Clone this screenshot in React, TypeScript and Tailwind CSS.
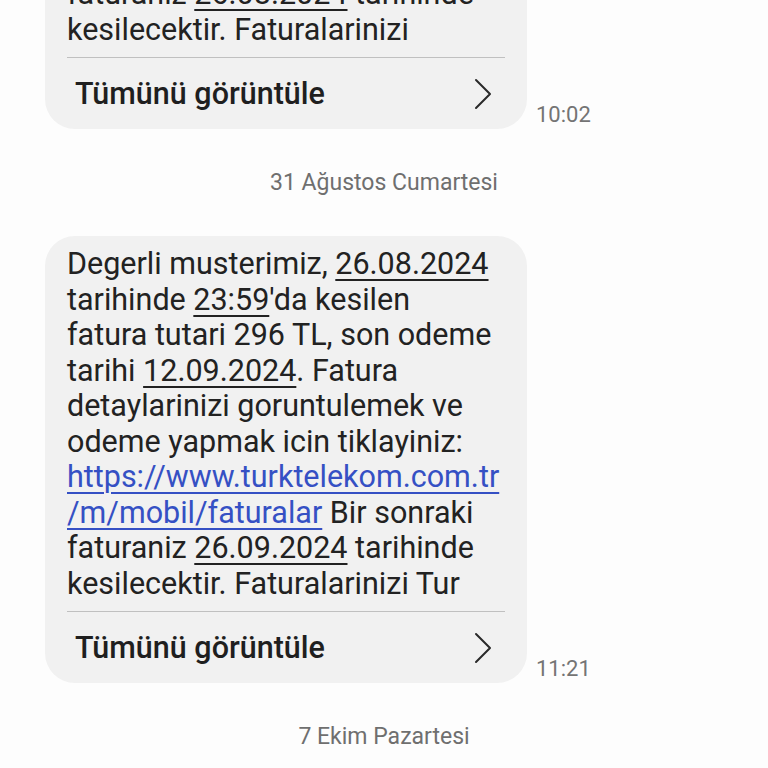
import React from 'react';

const font = { fontFamily: 'Roboto, "Noto Sans", Arial, sans-serif' };

function Underlined({ children }: { children: React.ReactNode }) {
  return <span className="underline decoration-[1.5px] underline-offset-[5px]">{children}</span>;
}

function Footer() {
  return (
    <div className="mx-[22px] border-t border-[#c0c0c0]">
      <div className="flex h-[71px] items-center justify-between pl-[8px] pr-[12px] pt-[1px]">
        <span className="text-[30.5px] font-medium text-[#1f1f1f]">Tümünü görüntüle</span>
        <svg width="20" height="32" viewBox="0 0 20 32" fill="none">
          <path d="M3 2 L17 16 L3 30" stroke="#2a2a2a" strokeWidth="2" strokeLinejoin="round" strokeLinecap="round" />
        </svg>
      </div>
    </div>
  );
}

function Bubble({ lines, time, className }: { lines: React.ReactNode; time: string; className?: string }) {
  return (
    <div className={`flex items-end pl-[45px] ${className ?? ''}`}>
      <div className="w-[482px] rounded-[30px] bg-[#f1f1f1]">
        <div className="px-[22px] pt-[10px] pb-[10px] text-[30.5px] leading-[35.5px] text-[#222]">{lines}</div>
        <Footer />
      </div>
      <span className="mb-[1px] ml-[9px] text-[22px] leading-[26px] text-[#747474]">{time}</span>
    </div>
  );
}

function DateLabel({ children }: { children: React.ReactNode }) {
  return <div className="py-[40px] text-center text-[23px] leading-[27px] text-[#6f6f6f]">{children}</div>;
}

export default function App() {
  return (
    <div className="h-[768px] w-[768px] overflow-hidden bg-[#fdfdfd]" style={font}>
      <Bubble
        className="-mt-[34px]"
        time="10:02"
        lines={
          <>
            <div className="whitespace-nowrap">
              faturaniz <Underlined>26.08.2024</Underlined> tarihinde
            </div>
            <div className="whitespace-nowrap">kesilecektir. Faturalarinizi</div>
          </>
        }
      />
      <DateLabel>31 Ağustos Cumartesi</DateLabel>
      <Bubble
        time="11:21"
        lines={
          <>
            <div className="whitespace-nowrap">
              Degerli musterimiz, <Underlined>26.08.2024</Underlined>
            </div>
            <div className="whitespace-nowrap">
              tarihinde <Underlined>23:59</Underlined>'da kesilen
            </div>
            <div className="whitespace-nowrap">fatura tutari 296 TL, son odeme</div>
            <div className="whitespace-nowrap">
              tarihi <Underlined>12.09.2024</Underlined>. Fatura
            </div>
            <div className="whitespace-nowrap">detaylarinizi goruntulemek ve</div>
            <div className="whitespace-nowrap">odeme yapmak icin tiklayiniz:</div>
            <div className="whitespace-nowrap">
              <a href="#" className="text-[#3550c4] underline decoration-[1.5px] underline-offset-[5px]">
                https://www.turktelekom.com.tr
              </a>
            </div>
            <div className="whitespace-nowrap">
              <a href="#" className="text-[#3550c4] underline decoration-[1.5px] underline-offset-[5px]">
                /m/mobil/faturalar
              </a>{' '}
              Bir sonraki
            </div>
            <div className="whitespace-nowrap">
              faturaniz <Underlined>26.09.2024</Underlined> tarihinde
            </div>
            <div className="whitespace-nowrap">kesilecektir. Faturalarinizi Tur</div>
          </>
        }
      />
      <DateLabel>7 Ekim Pazartesi</DateLabel>
    </div>
  );
}
